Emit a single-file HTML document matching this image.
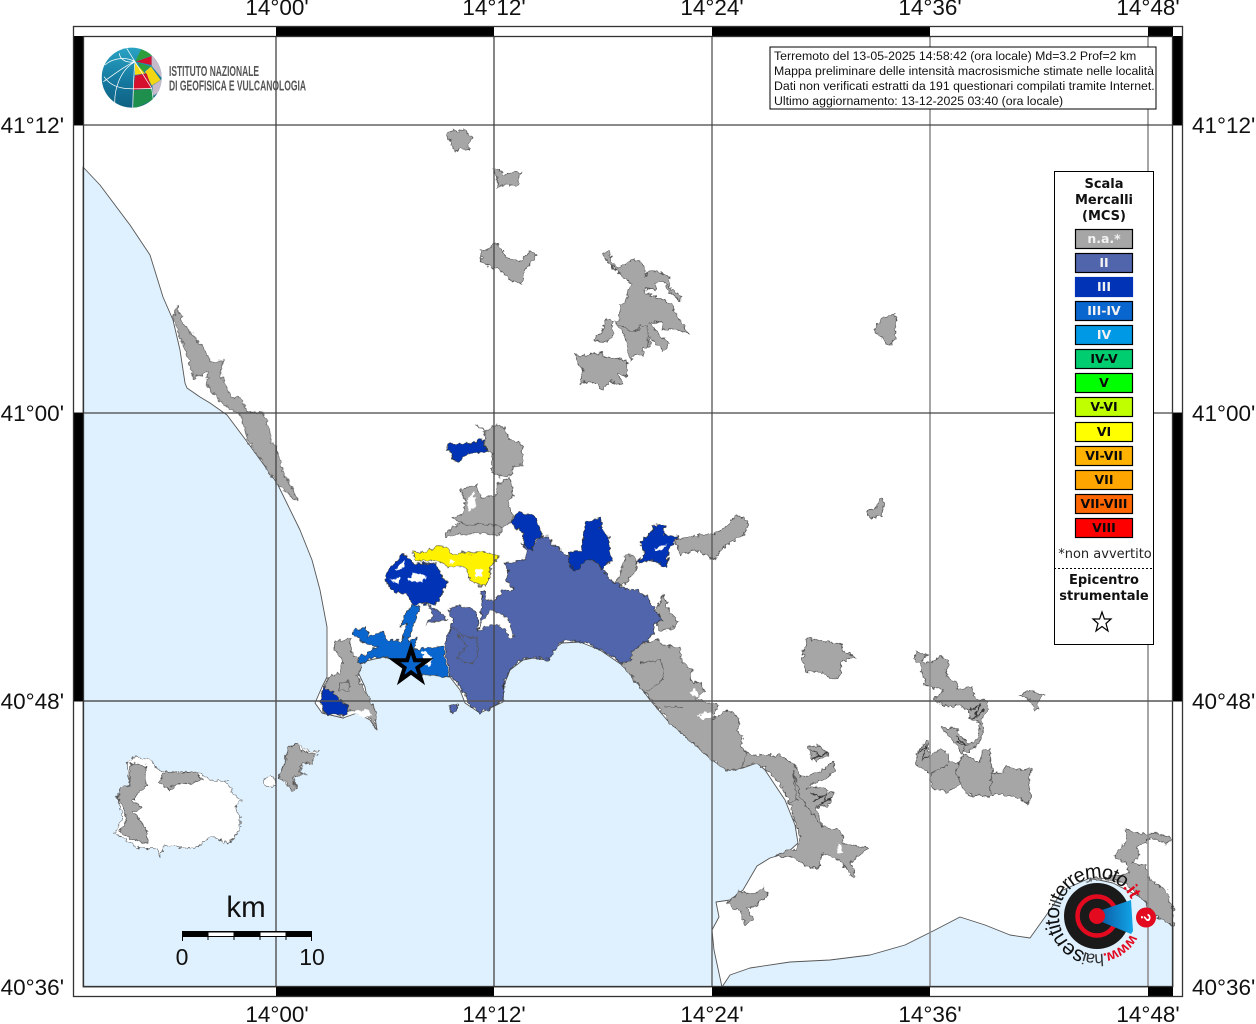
<!DOCTYPE html>
<html><head><meta charset="utf-8"><title>Mappa intensità</title>
<style>
html,body{margin:0;padding:0;background:#fff}
svg{display:block}
.lb{font-family:"Liberation Sans",sans-serif;font-size:22.5px;fill:#111}
.dv{font-family:"DejaVu Sans",sans-serif;font-weight:bold;font-size:13px;text-anchor:middle}
.sw{font-family:"DejaVu Sans",sans-serif;font-weight:bold;font-size:12.5px;text-anchor:middle}
.gr polygon{fill:#a6a6a6;stroke:#555;stroke-width:.8;stroke-linejoin:round;vector-effect:non-scaling-stroke}
.wh polygon{fill:#fff;stroke:#555;stroke-width:.6;vector-effect:non-scaling-stroke}
.ln polyline{fill:none;stroke:#555;stroke-width:.8;vector-effect:non-scaling-stroke}
.dk polyline{fill:none;stroke:#333;stroke-width:1.1;vector-effect:non-scaling-stroke}
.t3 polygon{fill:#0033b5;stroke:#333;stroke-width:.7;stroke-linejoin:round;vector-effect:non-scaling-stroke}
</style></head><body>
<svg width="1256" height="1024" viewBox="0 0 1256 1024" xmlns="http://www.w3.org/2000/svg">
<defs>
<filter id="j" filterUnits="userSpaceOnUse" x="0" y="0" width="1256" height="1024" color-interpolation-filters="sRGB">
<feTurbulence type="fractalNoise" baseFrequency=".22" numOctaves="2" seed="4" result="n"/>
<feDisplacementMap in="SourceGraphic" in2="n" scale="6" xChannelSelector="R" yChannelSelector="G"/>
</filter>
<linearGradient id="gb" x1="0" y1="0" x2="0" y2="1"><stop offset="0" stop-color="#2aa4c4"/><stop offset=".55" stop-color="#15789f"/><stop offset="1" stop-color="#0e5f80"/></linearGradient>
<clipPath id="cg"><circle cx="185" cy="173" r="90"/></clipPath>
<linearGradient id="bc" x1="0" y1="0" x2="1" y2="0"><stop offset="0" stop-color="#0b5fa8"/><stop offset="1" stop-color="#12a5e8"/></linearGradient>
</defs>
<rect width="1256" height="1024" fill="#fff"/>
<!-- sea -->
<g fill="#dff1fe" stroke="#555" stroke-width=".9" stroke-linejoin="round">
<polygon points="83,167 100,185 130,225 150,255 163,297 173,320 180,350 185,383 187,388 200,397 210,403 227,415 248,443 277,483 300,530 312,560 320,590 327,627 327,677 322,687 315,703 322,713 343,718 357,713 370,720 377,730 375,717 368,703 365,687 357,670 362,662 383,657 397,660 417,673 450,677 460,690 465,703 480,713 503,702 504,685 510,670 523,660 533,658 547,660 552,650 562,643 580,642 600,650 622,665 635,680 650,700 667,720 690,740 712,760 727,770 743,768 757,763 765,770 775,785 785,800 795,825 798,843 787,853 770,858 757,866 743,890 730,900 716,902 719,917 712,930 714,950 722,987 83,987"/>
<polygon points="722,987 730,975 750,968 790,962 830,960 870,955 905,945 935,930 960,917 985,925 1010,935 1030,938 1050,910 1063,890 1090,878 1113,883 1140,897 1173,927 1173,987"/>
</g>
<g filter="url(#j)">
<!-- Ischia & Procida (zoom5 coords) -->
<g transform="translate(80 720) scale(.33333)">
<g class="wh">
<polygon points="140,125 165,112 215,120 225,140 250,155 350,155 390,180 440,185 460,220 485,240 465,260 480,290 480,330 445,370 395,350 345,385 250,378 240,410 230,385 175,385 105,340 130,290 110,230 150,190"/>
<polygon points="550,185 570,165 585,175 585,200 560,200"/>
<polygon points="598,170 620,100 650,70 680,90 715,95 695,135 672,125 660,155 678,162 640,172 652,208 635,212 612,185"/>
</g>
<g class="gr">
<polygon points="150,130 195,135 200,195 180,215 160,240 185,265 160,275 180,300 205,340 200,370 150,355 120,335 140,300 130,260 112,235 120,205 150,195"/>
<polygon points="235,190 255,155 300,160 345,155 365,180 330,190 280,195 270,210 250,195"/>
<polygon points="595,175 620,110 625,80 650,72 665,92 708,100 695,128 665,128 658,155 672,160 650,165 635,170 650,205 635,208 615,180"/>
</g>
</g>
<!-- scattered gray -->
<g class="gr">
<polygon points="447,135 452,130 458,132 464,129 472,137 468,144 470,150 461,148 455,152 451,143"/>
<polygon points="493,170 499,169 505,175 514,172 522,172 518,180 518,185 505,185 497,188 498,178"/>
<polygon points="480,250 488,250 495,242 503,250 505,257 520,262 530,252 537,255 528,265 525,272 522,285 510,280 500,270 488,266 482,262"/>
<polygon points="866,512 876,508 880,498 884,500 883,508 882,516 870,518"/>
<polygon points="675,540 700,535 716,533 728,525 735,515 748,520 745,535 725,545 715,560 695,550 680,555"/>
</g>
<!-- zoom6 -->
<g transform="translate(560 240) scale(.33333)" class="gr">
<polygon points="125,42 150,35 155,70 175,85 220,58 250,70 255,110 262,92 300,97 330,112 325,140 365,170 360,185 320,145 310,125 290,130 285,150 258,145 250,155 335,190 350,225 385,280 350,270 310,270 305,245 265,250 325,310 310,335 270,290 272,320 245,325 250,350 225,345 212,360 205,330 195,285 165,248 180,235 180,195 195,190 205,150 215,130 185,110 170,90 150,75"/>
<polygon points="100,298 130,270 140,235 160,245 155,270 165,280 140,305 105,305"/>
<polygon points="45,340 65,350 100,340 125,340 135,350 200,360 200,410 175,400 190,432 150,425 125,450 110,430 85,425 60,430 70,390 50,360"/>
<polygon points="940,270 965,235 985,230 1005,220 1008,245 1005,295 990,315 975,310 960,290"/>
</g>
<g transform="translate(560 240) scale(.33333)" class="ln"><polyline points="165,248 215,275 235,272 240,255 260,255 265,290 262,320"/></g>
<!-- north coast zoom8 -->
<g transform="translate(160 290) scale(.33333)" class="gr">
<polygon points="50,45 70,100 130,175 155,215 190,210 180,250 215,325 245,320 260,365 310,370 330,420 330,460 345,460 370,550 385,575 415,635 400,625 380,610 350,580 265,455 240,370 220,365 165,320 140,280 145,245 100,265 85,210 40,85"/>
</g>
<!-- zoom7 gray -->
<g transform="translate(640 630) scale(.33333)">
<g class="gr">
<polygon points="-25,40 60,30 65,45 120,50 125,95 155,120 150,150 185,160 195,185 165,205 235,225 220,265 265,240 300,265 290,300 310,320 300,350 335,375 420,375 460,400 480,440 530,430 580,395 585,425 560,445 520,460 500,480 530,470 585,490 560,530 530,530 545,590 600,600 615,640 685,655 630,700 650,740 640,745 600,690 545,670 535,715 500,710 460,680 405,680 440,660 470,660 480,620 465,570 445,510 410,450 370,410 340,400 305,415 260,420 215,390 170,350 85,275 40,215 0,170 -55,105 -30,70"/>
<polygon points="505,350 535,345 565,375 525,395 510,370"/>
<polygon points="500,25 560,35 600,40 610,60 645,80 600,95 605,130 585,150 540,125 500,125 487,90"/>
<polygon points="822,85 830,68 860,72 845,95 870,100 900,78 925,95 915,135 945,155 960,180 995,170 1005,205 1045,215 1045,240 1025,265 1030,300 1020,335 985,365 960,360 985,345 1015,325 1020,280 990,265 985,240 950,225 930,232 880,212 910,180 870,170 855,165 840,100"/>
<polygon points="905,293 950,295 955,310 985,340 965,370 1020,395 1030,360 1050,355 1055,430 1090,430 1095,405 1130,420 1175,415 1165,470 1175,490 1165,525 1140,505 1060,490 1050,500 985,495 960,460 925,485 875,475 870,430 830,405 830,370 860,330 870,380 900,355 925,370 925,395 955,400 970,375 945,340 925,320"/>
<polygon points="1138,200 1165,180 1215,195 1190,215 1197,240 1185,240 1170,210"/>
<polygon points="260,820 300,785 350,790 370,770 385,800 360,815 345,830 320,835 340,865 315,885 305,850"/>
</g>
<g fill="#fff"><polygon points="170,255 200,245 225,260 190,270"/><polygon points="145,190 165,175 175,200"/><polygon points="590,650 600,640 610,670 590,670"/></g>
<g class="ln">
<polyline points="0,100 60,90 75,130 60,160 20,185"/>
<polyline points="75,230 130,230"/>
<polyline points="305,415 320,365"/>
<polyline points="440,520 470,510 460,420 480,500 545,590"/>
<polyline points="960,460 950,420 955,400"/>
<polyline points="1055,430 1050,490"/>
<polyline points="870,430 925,405"/>
</g>
<g class="dk">
<polyline points="510,490 540,500 520,515 560,490 550,520 575,505 535,525"/>
<polyline points="510,360 540,375 520,385 560,370"/>
<polyline points="835,370 860,345 845,395 870,370"/>
<polyline points="985,245 1020,225 1000,270 1030,240"/>
<polyline points="945,320 980,345 950,335"/>
</g>
</g>
<!-- zoom2 -->
<g transform="translate(300 420) scale(.33333)">
<g class="gr">
<polygon points="530,15 555,35 590,15 610,20 630,60 665,70 670,135 640,140 635,165 600,170 575,155 578,100 555,95 555,40"/>
<polygon points="480,210 530,195 545,235 590,225 590,195 630,170 640,225 625,245 640,290 625,315 605,320 600,345 520,340 465,345 435,350 455,320 490,310 455,295 490,280 495,240"/>
<polygon points="930,515 960,465 975,405 1005,405 1010,440 980,490"/>
<polygon points="1090,525 1110,580 1135,605 1110,630 1075,630 1065,575"/>
<polygon points="105,665 150,655 155,700 175,720 185,745 170,770 200,820 230,880 225,925 205,890 150,870 130,890 70,880 65,850 75,800 85,770 120,760 130,720 105,690"/>
</g>
<g fill="#fff"><polygon points="500,245 520,215 530,250 510,275"/><polygon points="150,875 200,870 215,885 190,890"/></g>
<g class="ln"><polyline points="465,310 570,315 605,320"/><polyline points="115,790 150,785 145,815 120,810 115,790"/><polyline points="165,760 200,820"/></g>
<!-- II -->
<polygon fill="#5065ab" stroke="#333" stroke-width=".7" stroke-linejoin="round" style="vector-effect:non-scaling-stroke" points="590,540 610,510 640,510 620,480 625,450 610,430 650,425 675,415 680,395 665,370 690,385 720,350 745,350 760,375 790,395 805,410 860,420 880,420 910,450 930,480 965,500 985,510 1000,505 1040,530 1070,575 1085,600 1065,610 1060,640 1045,660 1000,690 990,725 965,730 940,710 900,690 880,680 860,665 830,665 800,660 780,665 760,695 745,720 700,712 660,720 630,750 612,790 610,840 580,860 540,880 510,855 495,825 470,785 450,770 435,680 460,600 445,570 470,555 500,560 525,570 535,600 532,635 540,620 545,550 545,515 555,515 555,540"/>
<polygon fill="#5065ab" stroke="#333" stroke-width=".7" style="vector-effect:non-scaling-stroke" points="385,555 420,575 440,600 380,610 400,590"/>
<polygon fill="#5065ab" stroke="#333" stroke-width=".7" style="vector-effect:non-scaling-stroke" points="447,860 475,850 470,875 455,878"/>
<polygon fill="#fff" stroke="#444" stroke-width=".6" style="vector-effect:non-scaling-stroke" points="535,635 545,605 560,590 565,570 585,575 600,580 625,600 640,650 630,655 615,630 590,615 570,612"/>
<g class="ln"><polyline points="455,620 490,650 530,650 535,700 520,730 490,725 470,710 500,680 470,640"/></g>
<!-- III-IV -->
<polygon fill="#0a66cf" stroke="#333" stroke-width=".7" style="vector-effect:non-scaling-stroke" points="155,635 200,620 205,650 245,635 265,660 305,665 320,610 300,620 315,585 335,555 360,560 345,600 330,640 325,665 350,650 345,690 390,680 430,680 445,770 420,770 350,760 290,720 250,712 210,715 180,735 175,715 230,680 195,670 165,650"/>
<polygon fill="#fff" points="365,692 385,700 400,722 380,742 370,720"/>
<!-- III -->
<g class="t3">
<polygon points="250,480 262,465 270,440 290,425 310,400 325,415 340,430 360,430 385,430 410,430 425,470 445,485 425,525 405,555 370,550 340,555 320,520 280,515 265,490"/>
<polygon points="440,72 510,70 550,58 560,95 505,100 475,125 460,120 455,95 440,90"/>
<polygon points="630,310 655,275 705,290 728,345 705,360 695,390 672,375 665,335"/>
<polygon points="805,395 845,390 855,305 905,290 900,325 925,350 935,420 905,447 880,420 855,425 830,450 808,440"/>
<polygon points="1010,430 1035,400 1020,370 1055,335 1060,315 1095,315 1090,345 1135,350 1105,395 1100,445 1060,420"/>
<polygon points="70,800 100,820 145,860 140,885 100,885 75,880 62,845"/>
</g>
<polygon fill="#fff" points="340,458 380,468 365,488 325,482"/>
<polygon fill="#fff" points="285,450 315,420 310,445"/>
<polygon fill="#fff" points="268,480 300,470 295,490"/>
<polygon fill="#fff" points="1060,385 1100,375 1080,392"/>
<!-- yellow -->
<polygon fill="#fff200" stroke="#444" stroke-width=".7" stroke-linejoin="round" style="vector-effect:non-scaling-stroke" points="340,395 380,395 405,385 410,378 440,380 460,405 490,395 510,400 560,395 595,410 570,440 570,470 555,500 520,490 505,465 495,440 440,440 410,420 360,425 345,420"/>
<polygon fill="#fff" points="525,450 550,445 545,470 530,472"/>
<polygon fill="#fff" points="445,420 465,425 450,432"/>
</g>
<!-- upper-right coast under logo (zoom3) -->
<g transform="translate(1030 820) scale(.33333)" class="gr">
<polygon points="250,110 290,60 285,25 320,40 385,40 425,55 410,70 365,55 320,80 330,105 305,130 345,135 360,180 410,210 430,270 430,320 380,290 330,230 290,190 240,180 200,170 170,185 240,170 300,160 290,130 255,115"/>
</g>
</g>
<!-- grid -->
<g stroke="#444" stroke-width="1.3" fill="none">
<path d="M276 36V987M494 36V987"/>
<path d="M712 36V987" stroke="#555"/>
<path d="M930 36V987M1148 36V987" stroke="#888" stroke-width="1.5"/>
<path d="M73 125H1183M73 413H1183"/>
<path d="M73 701H1183" stroke="#555" stroke-width="1.5"/>
</g>
<!-- frame -->
<g fill="#000">
<rect x="276" y="27" width="218" height="9"/><rect x="712" y="27" width="218" height="9"/><rect x="1148" y="27" width="25" height="9"/>
<rect x="276" y="987" width="218" height="9"/><rect x="712" y="987" width="218" height="9"/><rect x="1148" y="987" width="25" height="9"/>
<rect x="74" y="36" width="9" height="89"/><rect x="74" y="413" width="9" height="288"/>
<rect x="1173" y="36" width="9" height="89"/><rect x="1173" y="413" width="9" height="288"/>
</g>
<g fill="none" stroke="#333" stroke-width="1.3"><rect x="73.5" y="26.5" width="1109" height="970"/><rect x="83.5" y="36.5" width="1089" height="950"/></g>
<!-- axis labels -->
<g class="lb" text-anchor="middle">
<text x="277" y="15">14°00'</text><text x="494" y="15">14°12'</text><text x="712" y="15">14°24'</text><text x="930" y="15">14°36'</text><text x="1148" y="15">14°48'</text>
<text x="277" y="1022">14°00'</text><text x="494" y="1022">14°12'</text><text x="712" y="1022">14°24'</text><text x="930" y="1022">14°36'</text><text x="1148" y="1022">14°48'</text>
</g>
<g class="lb" text-anchor="end">
<text x="64" y="133">41°12'</text><text x="64" y="421">41°00'</text><text x="64" y="709">40°48'</text><text x="64" y="995">40°36'</text>
</g>
<g class="lb">
<text x="1192" y="133">41°12'</text><text x="1192" y="421">41°00'</text><text x="1192" y="709">40°48'</text><text x="1192" y="995">40°36'</text>
</g>
<!-- star -->
<polygon points="411,648.2 414.9,660.3 427.6,660.3 417.4,667.8 421.3,679.9 411,672.4 400.7,679.9 404.6,667.8 394.4,660.3 407.1,660.3" fill="#0a66cf" stroke="#000" stroke-width="4" stroke-miterlimit="10"/>
<!-- INGV logo -->
<g transform="translate(70 20) scale(.33333)">
<g clip-path="url(#cg)">
<rect x="95" y="80" width="180" height="190" fill="url(#gb)"/>
<polygon points="195,125 215,85 250,105" fill="#2e9e3c"/>
<polygon points="198,125 245,108 245,135" fill="#d5102e"/>
<polygon points="245,105 280,130 280,180 245,138" fill="#c6bacb"/>
<polygon points="205,128 242,140 215,157" fill="#2e9e3c"/>
<polygon points="195,128 225,160 195,165" fill="#f7d90f"/>
<polygon points="243,140 272,180 245,197 225,155" fill="#f2d513"/>
<polygon points="195,167 230,160 245,205 190,210" fill="#d5102e"/>
<polygon points="247,197 280,175 272,212 250,228" fill="#c6bacb"/>
<polygon points="190,212 246,205 252,238 190,268" fill="#1f8f4e"/>
<g fill="none" stroke="#fff" stroke-width="2.2">
<path d="M195 125 L170 85M195 125 C170 110 130 112 105 135M195 125 C165 135 125 170 100 185M195 125 C190 170 190 220 188 265M195 125 C150 150 130 210 135 262"/>
<path d="M102 170 C130 210 170 208 245 205M148 100 C150 120 170 130 195 125"/>
<path d="M195 125 L245 205L250 240"/>
</g>
</g>
</g>
<g font-family="'Liberation Sans',sans-serif" fill="#555" font-weight="bold">
<text x="169" y="76" font-size="15" textLength="90" lengthAdjust="spacingAndGlyphs">ISTITUTO NAZIONALE</text>
<text x="169" y="90.5" font-size="15" textLength="137" lengthAdjust="spacingAndGlyphs">DI GEOFISICA E VULCANOLOGIA</text>
</g>
<!-- info box -->
<rect x="770" y="47" width="386" height="62" fill="#fff" stroke="#000" stroke-width="1"/>
<g font-family="'Liberation Sans',sans-serif" font-size="12.3" fill="#111">
<text x="774" y="60">Terremoto del 13-05-2025 14:58:42 (ora locale) Md=3.2 Prof=2 km</text>
<text x="774" y="75">Mappa preliminare delle intensità macrosismiche stimate nelle località</text>
<text x="774" y="90">Dati non verificati estratti da 191 questionari compilati tramite Internet.</text>
<text x="774" y="105">Ultimo aggiornamento: 13-12-2025 03:40 (ora locale)</text>
</g>
<!-- legend -->
<rect x="1054.5" y="171.5" width="99" height="473" fill="#fff" stroke="#000" stroke-width="1"/>
<g class="dv" fill="#111">
<text x="1104" y="188">Scala</text><text x="1104" y="204">Mercalli</text><text x="1104" y="220">(MCS)</text>
<text x="1104" y="584">Epicentro</text><text x="1104" y="600">strumentale</text>
</g>
<g stroke="#000" stroke-width="1.2">
<rect x="1075.5" y="229.5" width="57" height="19" fill="#a6a6a6"/>
<rect x="1075.5" y="253.5" width="57" height="19" fill="#5065ab"/>
<rect x="1075.5" y="277.5" width="57" height="19" fill="#0033b5" stroke="#0033b5"/>
<rect x="1075.5" y="301.5" width="57" height="19" fill="#0a66cf"/>
<rect x="1075.5" y="325.5" width="57" height="19" fill="#0099e6"/>
<rect x="1075.5" y="349.5" width="57" height="19" fill="#00cc70"/>
<rect x="1075.5" y="373.5" width="57" height="19" fill="#00ff00"/>
<rect x="1075.5" y="397.5" width="57" height="19" fill="#bfff00"/>
<rect x="1075.5" y="422.5" width="57" height="19" fill="#ffff00"/>
<rect x="1075.5" y="446.5" width="57" height="19" fill="#ffb200"/>
<rect x="1075.5" y="470.5" width="57" height="19" fill="#ffa500"/>
<rect x="1075.5" y="494.5" width="57" height="19" fill="#ff6600"/>
<rect x="1075.5" y="518.5" width="57" height="19" fill="#ff0000"/>
</g>
<g class="sw" fill="#f2f2f2">
<text x="1104" y="243">n.a.*</text><text x="1104" y="267">II</text><text x="1104" y="291">III</text><text x="1104" y="315">III-IV</text><text x="1104" y="339">IV</text>
</g>
<g class="sw" fill="#0a0a0a">
<text x="1104" y="363">IV-V</text><text x="1104" y="387">V</text><text x="1104" y="411">V-VI</text><text x="1104" y="436">VI</text><text x="1104" y="460">VI-VII</text><text x="1104" y="484">VII</text><text x="1104" y="508">VII-VIII</text><text x="1104" y="532">VIII</text>
</g>
<text x="1105" y="558" font-family="'DejaVu Sans',sans-serif" font-size="13" text-anchor="middle" fill="#222">*non avvertito</text>
<line x1="1054" y1="568.5" x2="1153" y2="568.5" stroke="#000" stroke-dasharray="2 2"/>
<polygon points="1102,612 1104.4,619 1111,619 1106,623.5 1108,631 1102,626.5 1096,631 1098,623.5 1093,619 1099.6,619" fill="#fff" stroke="#000" stroke-width="1.2"/>
<!-- scale bar -->
<text x="246" y="917" font-family="'Liberation Sans',sans-serif" font-size="29.5" text-anchor="middle" fill="#111">km</text>
<g>
<rect x="182" y="931" width="130" height="6" fill="#000"/>
<rect x="208.5" y="932.5" width="25.5" height="3.5" fill="#fff"/>
<rect x="260.5" y="932.5" width="25.5" height="3.5" fill="#fff"/>
<path d="M182.5 931V941M208 931V940M234 931V940M260 931V940M286 931V940M311.5 931V941" stroke="#000" stroke-width="1"/>
</g>
<g font-family="'Liberation Sans',sans-serif" font-size="23" text-anchor="middle" fill="#111">
<text x="182" y="965">0</text><text x="312" y="965">10</text>
</g>
<!-- haisentito logo -->
<circle cx="1097" cy="916" r="33" fill="#1a1a1a"/>
<circle cx="1097" cy="916" r="19.5" fill="none" stroke="#e30a20" stroke-width="4.5"/>
<polygon points="1102,910 1131,900 1133,931 1131,934 1102,922" fill="url(#bc)"/>
<circle cx="1097" cy="916" r="8" fill="#e30a20"/>
<circle cx="1146" cy="917.5" r="10" fill="#e30a20"/>
<text transform="translate(1146 917.5) rotate(90)" font-family="'Liberation Sans',sans-serif" font-weight="bold" font-size="14" text-anchor="middle" fill="#fff"><tspan y="5">?</tspan></text>
<path id="circ" d="M1130.6 933.8 A38 38 0 1 1 1132.7 903" fill="none"/>
<text font-family="'Liberation Sans',sans-serif" font-size="20" fill="#111"><textPath href="#circ"><tspan fill="#e30a20" font-weight="bold" font-size="15" style="letter-spacing:-1px">www.</tspan><tspan fill="#333" font-size="17" style="letter-spacing:-1.5px">hai</tspan><tspan font-size="21" style="letter-spacing:-.9px">sentito</tspan><tspan fill="#333" font-size="16" style="letter-spacing:-.5px">il</tspan><tspan style="letter-spacing:-1.4px">terremoto</tspan><tspan fill="#e30a20" font-weight="bold" font-size="18" style="letter-spacing:-.5px">.it</tspan></textPath></text>
</svg>
</body></html>
